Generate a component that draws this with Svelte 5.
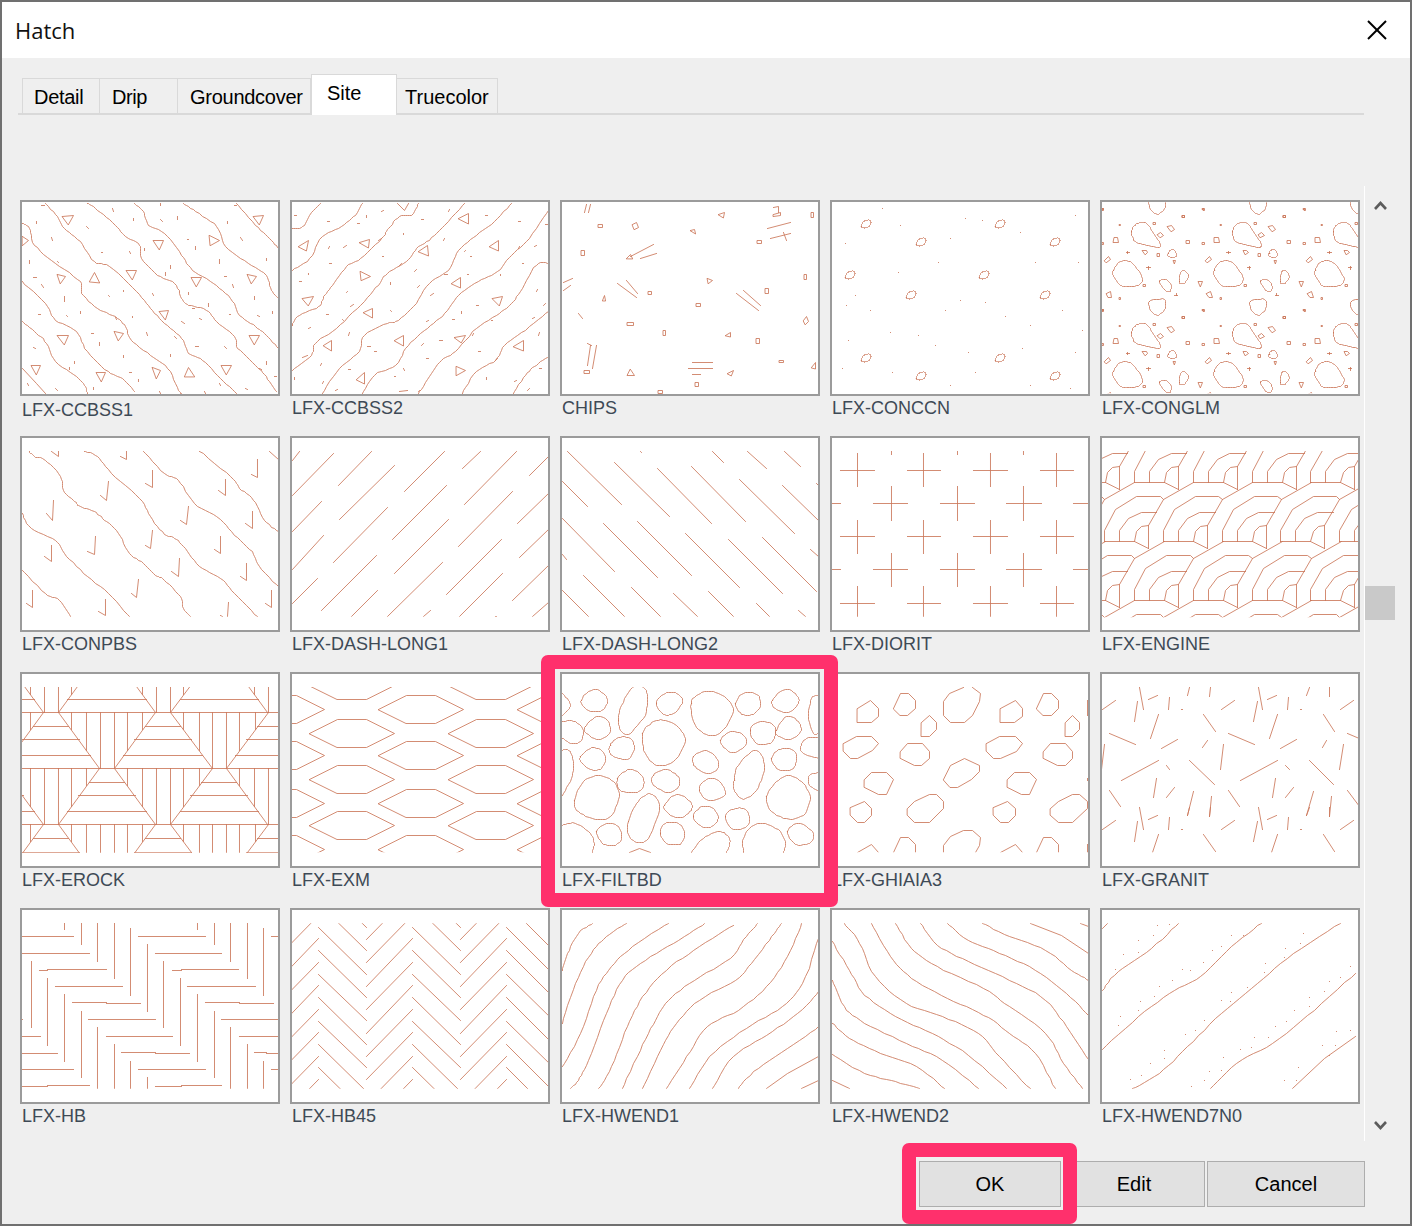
<script>
  // shift every "x y" pair of a path string
  const shift = (d, dx, dy) =>
    d.replace(/(-?[\d.]+) (-?[\d.]+)/g, (_, x, y) => `${+x + dx} ${+y + dy}`);

  function repeat(d, xs, ys) {
    let out = '';
    for (const y of ys) for (const x of xs) out += shift(d, x, y);
    return out;
  }

  const box = (x, y, w, h) => `M${x} ${y} ${x + w} ${y} ${x + w} ${y + h} ${x} ${y + h}Z`;
  const seg = (a, b, c, d) => `M${a} ${b} ${c} ${d}`;
  const dots = (list) => list.map(([x, y]) => `M${x} ${y} ${x} ${y}`).join('');

  // rounds hand-picked polylines off with a Catmull-Rom spline
  function smooth(d) {
    return d.match(/M[^M]*/g).map((sub) => {
      const nums = sub.match(/-?[\d.]+/g).map(Number);
      const closed = sub.includes('Z');
      const pts = [];
      for (let i = 0; i < nums.length; i += 2) pts.push([nums[i], nums[i + 1]]);
      if (pts.length < (closed ? 5 : 4)) return sub;
      const n = pts.length;
      const at = (i) => (closed ? pts[(i + n) % n] : pts[Math.max(0, Math.min(n - 1, i))]);
      let out = `M${pts[0][0]} ${pts[0][1]}`;
      for (let i = 0; i < (closed ? n : n - 1); i++) {
        const [p0, p1, p2, p3] = [at(i - 1), at(i), at(i + 1), at(i + 2)];
        for (let k = 1; k <= 6; k++) {
          const t = k / 6;
          const f = (a, b, c, e) =>
            0.5 * (2 * b + (c - a) * t + (2 * a - 5 * b + 4 * c - e) * t * t + (3 * b - a - 3 * c + e) * t * t * t);
          out += ` ${f(p0[0], p1[0], p2[0], p3[0]).toFixed(1)} ${f(p0[1], p1[1], p2[1], p3[1]).toFixed(1)}`;
        }
      }
      return out + (closed ? 'Z' : '');
    }).join('');
  }

  // concrete pebbles
  const pebble = (x, y) => `M${x - 5} ${y + 2} ${x - 2} ${y - 3} ${x + 3} ${y - 4} ${x + 5} ${y - 2} ${x + 3} ${y + 2} ${x - 2} ${y + 4}Z`;

  const conglmCell = `M125 125 135 105 155 97 175 105 190 130 208 155 208 172 170 165 135 155Z
    M70 240 90 215 120 215 140 235 157 265 145 285 105 290 85 280 70 255Z
    M178 335 222 328 225 355 205 375 185 365Z
    M72 143 82 141 86 157 70 157Z M232 110 245 106 253 118 245 124Z M202 132 212 128 220 135 210 142Z
    M157 182 168 180 173 188 165 193Z M235 190 245 178 257 185 257 200 236 200Z M43 210 55 200 62 208 50 218Z
    M250 212 257 212 253 220Z M268 275 272 248 282 241 295 258 285 278 272 280Z
    M208 275 225 268 243 285 240 303 225 300Z M48 310 60 303 65 322 55 322Z M325 275 338 275 332 288Z
    ${box(277, 75, 6, 6)}${box(190, 97, 6, 6)}${box(290, 152, 8, 8)}${box(202, 191, 7, 7)}${box(160, 283, 7, 7)}${box(277, 379, 7, 7)}
    ${box(37, 56, 4, 4)}${box(88, 103, 4, 4)}${box(88, 323, 4, 4)}${box(36, 357, 3, 3)}${box(36, 158, 4, 4)}
    M108 187 118 187M113 183 113 191M170 233 180 233M175 229 175 237M253 315 263 315M258 309 258 315`;

  const engineUnit = `M28 333 118 333 160 355
    M28 333 28 300 62 238 125 200 195 200 205 207 160 285
    M205 207 295 157
    M73 333 73 300 100 265 138 247 185 247
    M118 333 125 305 140 290 160 285 160 355`;

  function engine() {
    let out = '';
    for (let k = -3; k <= 3; k++) {
      const odd = Math.abs(k) % 2 === 1;
      for (let n = -2; n <= 5; n++) {
        out += shift(engineUnit, (odd ? 90 : 0) + 176.5 * n, 177 * k);
      }
    }
    return out;
  }

  function erock() {
    let out = seg(35, 142, 765, 142) + seg(35, 310, 765, 310) + seg(35, 478, 765, 478);
    const rows = [
      [-26, [-43, 277, 597]],
      [142, [117, 437, 756]],
      [310, [-43, 277, 597]],
      [478, [117, 437, 756]],
      [646, [-43, 277, 597]],
    ];
    for (const [y, centres] of rows) {
      for (const c of centres) {
        out += seg(c - 21, y, c - 139, y - 168) + seg(c + 21, y, c + 139, y - 168);
        for (const o of [20, 58, 102]) {
          const bottom = o <= 21 ? y : y - (o - 21) * 1.424;
          out += seg(c - o, y - 168, c - o, bottom) + seg(c + o, y - 168, c + o, bottom);
        }
        out += seg(c - 50, y + 42, c + 50, y + 42);
        const mid = y === 478 ? 84 : 81;
        out += seg(c - 81, y + mid, c + 81, y + mid);
        out += seg(c - 112, y + 129, c + 112, y + 129);
      }
    }
    return out;
  }

  function exm() {
    const hex = (x, y) => `M${x - 120} ${y} ${x - 40} ${y - 42} ${x + 42} ${y - 42} ${x + 122} ${y} ${x + 42} ${y + 42} ${x - 40} ${y + 42}Z`;
    let out = '';
    for (const x of [973, 1370]) for (const y of [61, 205, 343, 481]) out += hex(x, y);
    for (const x of [775, 1170, 1568]) for (const y of [133, 271, 415, 552]) out += hex(x, y);
    return out;
  }

  const granitCell = `M790 133 828 106M896 67 907 133M892 110 882 170M922 103 948 91M982 97 980 133M1040 67 1034 91
    M1098 67 1097 95M1016 132 1018 133M950 148 928 220M1080 148 1113 200M810 205 885 238M958 250 1005 224
    M1090 226 1077 247M1137 238 1127 314M845 346 951 287M973 300 983 314M1040 287 1110 358M945 340 937 397
    M997 367 973 397M810 376 843 424M1052 380 1034 452M1103 394 1097 455`;

  function herring45() {
    let out = '';
    for (let k = -2; k <= 8; k++) {
      const up = 118 + 70.3 * k;
      const down = 82 + 70.3 * k;
      for (const x of [747, 1015, 1283]) out += seg(x, up, x + 133, up - 142);
      for (const x of [880, 1148, 1415]) out += seg(x, down, x + 135, down + 140);
    }
    return out;
  }

  const hbRows = [
    [108, 35, 182], [108, 365, 558], [108, 745, 765], [160, 37, 228], [160, 416, 604],
    [208, 108, 274], [208, 488, 652], [211, 83, 108], [211, 462, 488], [258, 131, 322], [258, 507, 701],
    [307, 177, 274], [307, 556, 653], [310, 274, 371], [310, 653, 750], [357, 225, 416], [357, 604, 765], [357, 35, 37],
    [408, 35, 86], [408, 274, 462], [408, 653, 765], [460, 35, 134], [460, 416, 513], [460, 730, 765],
    [457, 319, 416], [457, 696, 730], [508, 35, 182], [508, 365, 558], [508, 745, 765],
    [558, 37, 108], [558, 416, 488], [555, 108, 228], [555, 488, 604],
  ];
  const hbCols = [
    [155, 70, 87], [534, 70, 87], [203, 70, 134], [583, 70, 134], [249, 70, 185], [628, 70, 185],
    [297, 70, 236], [677, 70, 236], [343, 85, 285], [722, 85, 285], [391, 132, 335], [437, 183, 383],
    [61, 183, 383], [106, 235, 435], [486, 235, 435], [155, 283, 485], [534, 283, 485], [203, 333, 533],
    [583, 333, 533], [249, 381, 566], [628, 381, 566], [297, 432, 566], [677, 432, 566], [343, 484, 566],
    [722, 484, 566], [391, 531, 566],
  ];
  const herring = hbRows.map(([y, a, b]) => seg(a, y, b, y)).join('') + hbCols.map(([x, a, b]) => seg(x, a, x, b)).join('');

  function diorit() {
    let out = '';
    const rowA = [[862, 813, 912], [1052, 1004, 1100], [1241, 1192, 1289], [1431, 1383, 1479]];
    const rowB = [[959, 909, 1006], [1147, 1098, 1195], [1335, 1286, 1386]];
    for (const [y, top, bottom] of [[121, 70, 170], [319, 270, 371], [520, 468, 560]]) {
      for (const [x, a, b] of rowA) out += seg(a, y, b, y) + seg(x, top, x, bottom);
    }
    for (const [y, top, bottom] of [[220, 168, 272], [418, 369, 470]]) {
      for (const [x, a, b] of rowB) out += seg(a, y, b, y) + seg(x, top, x, bottom);
      out += seg(790, y, 815, y) + seg(1477, y, 1520, y);
    }
    for (const x of [959, 1147, 1335]) out += seg(x, 63, x, 72);
    return out;
  }

  const tiles = [
    {
      name: 'LFX-CCBSS1', low: true, smooth: true, crop: [10, 195, 2.851, 3], clip: [15, 600],
      d: `M100 25 135 65 155 100 200 140 240 200 285 215 360 290 400 340 440 385 490 430 510 475 550 495 600 550 645 595
        M220 25 250 45 300 90 330 125 370 150 375 190 420 240 470 265 490 310 510 330 560 345 590 380 640 425 650 460 700 510 730 545 760 590
        M355 25 380 50 395 90 440 115 490 180 520 225 580 265 630 310 655 360 700 395 730 420 765 460
        M495 25 530 50 590 95 615 155 680 205 730 240 745 285 765 310
        M645 25 700 90 740 130 765 160
        M35 85 55 100 70 150 130 205 200 260 205 295 250 340 300 365 330 395 345 435 400 480 450 520 480 585 490 595
        M35 260 100 325 130 375 190 410 220 470 280 530 320 550 355 590
        M35 380 70 410 105 445 130 500 190 545 215 575 220 595
        M35 520 75 565 100 595
        M150 65 182 62 167 88ZM410 137 438 137 427 162ZM568 122 597 135 573 150ZM695 65 722 62 710 88ZM35 125 52 135 35 150Z
        M135 237 158 245 145 265ZM228 258 240 233 255 262ZM333 227 360 227 350 253ZM518 247 545 247 533 273ZM678 237 702 243 688 265Z
        M425 350 452 345 442 372ZM135 422 167 422 155 447ZM298 408 323 415 308 435ZM682 422 712 422 697 447Z
        M62 512 88 512 75 538ZM247 533 273 533 260 558ZM407 518 430 525 417 550ZM497 545 510 518 525 545ZM603 512 632 512 617 538Z
        M75 80 75 86M90 30 97 30M218 95 224 100M118 128 122 136M293 40 295 48M353 70 353 76M430 72 435 78M478 64 478 72M620 78 620 86
        M428 25 428 30M640 30 645 30M505 132 510 132M528 155 528 163M658 127 662 135M383 160 383 166M340 170 344 175M260 172 265 172
        M55 195 55 205M135 198 138 203M597 193 597 205M730 190 730 197M458 212 458 220M442 233 442 240M68 246 76 246M90 268 95 276
        M155 305 155 318M202 350 202 356M282 300 285 303M325 285 325 290M405 295 410 300M508 292 508 297M612 245 618 245M635 268 637 276
        M698 305 698 313M565 325 565 333M520 340 527 340M625 357 630 357M705 360 710 364M748 350 748 355M160 360 163 363M82 357 88 357
        M350 365 350 368M490 380 497 385M540 370 545 374M232 414 238 414M255 443 255 450M300 368 303 372M388 413 392 420M470 425 475 430
        M530 453 538 453M612 455 616 460M68 457 73 460M325 482 325 487M458 477 458 483M185 500 185 505M170 518 170 523M730 500 730 507
        M712 520 717 524M340 533 347 533M365 552 365 560M130 580 134 585M237 576 237 582M50 565 54 570M425 590 428 594M555 590 558 594
        M597 565 600 570M672 580 678 584M755 545 760 545`,
    },
    {
      name: 'LFX-CCBSS2', smooth: true, crop: [10, 195, 2.851, 3], clip: [15, 600],
      d: `M805 100 835 95 855 60 885 25
        M805 225 855 190 890 125 945 95 985 60 1005 25
        M805 390 825 360 880 335 895 305 920 270 960 215 1000 190 1060 130 1080 100 1110 65 1145 60 1165 25
        M1105 25 1125 45 1135 25
        M805 525 860 480 870 445 930 400 1000 330 1050 270 1075 235 1130 200 1160 160 1195 135 1240 90 1295 25
        M890 595 940 520 995 470 1010 420 1075 385 1100 380 1150 335 1195 265 1250 225 1280 165 1330 120 1380 80 1430 25
        M1005 595 1040 540 1100 510 1135 450 1190 400 1240 355 1280 300 1335 260 1390 230 1430 180 1480 130 1535 45
        M1165 595 1195 545 1230 495 1270 470 1330 400 1395 355 1430 325 1460 280 1500 210 1535 205
        M1290 595 1330 530 1385 495 1410 450 1470 405 1535 350
        M1435 595 1470 540 1500 510 1535 485
        M1280 70 1308 55 1308 85ZM823 153 850 137 845 165ZM997 143 1025 133 1022 157ZM1165 170 1190 150 1193 180Z
        M1368 155 1392 137 1392 167ZM1000 230 1027 243 1002 255ZM1258 265 1285 247 1285 277ZM835 310 865 303 850 330Z
        M1008 353 1033 340 1033 367ZM1375 310 1405 303 1395 330ZM895 450 918 435 918 465ZM1095 437 1122 422 1122 450Z
        M1268 427 1298 420 1288 442ZM1435 453 1463 435 1463 467ZM988 552 1010 533 1010 565ZM1272 515 1298 525 1272 540Z
        M812 62 818 60M905 78 912 78M990 85 996 85M1015 68 1015 62M1058 48 1065 45M1172 73 1178 73M1250 48 1252 42M1355 62 1360 60
        M1450 78 1456 78M1528 87 1533 87M1238 130 1236 137M1122 115 1122 118M1052 135 1058 130M908 160 912 155M950 157 958 152
        M1495 155 1502 150M1450 160 1453 155M1295 170 1300 167M1312 185 1316 185M1062 185 1066 185M912 205 918 205M1460 205 1465 205
        M1115 205 1110 210M1158 222 1152 228M850 238 850 234M825 258 830 258M1240 238 1246 238M1305 238 1308 238M1398 237 1398 240
        M1085 262 1085 268M1168 272 1162 278M962 288 958 292M1208 296 1200 300M1502 288 1504 284M978 328 972 334M1330 332 1336 332
        M1085 347 1087 350M1287 348 1287 355M1522 330 1526 326M902 357 908 357M1262 373 1268 372M948 372 950 376M850 400 856 398
        M1188 378 1194 375M1490 370 1494 366M1372 375 1376 375M968 412 966 420M1318 420 1322 416M1510 412 1506 420M1225 435 1232 435
        M1180 445 1174 450M1020 455 1028 455M1040 468 1046 468M1335 468 1340 468M835 488 848 482M885 510 888 506M1188 490 1194 490
        M965 522 972 522M1122 520 1124 525M1390 490 1384 495M1510 520 1516 520M812 548 812 554M895 560 892 566M1095 545 1100 545
        M1358 547 1358 554M1438 560 1444 556M1475 585 1480 580M935 582 928 586M1110 590 1132 587M1165 590 1168 587`,
    },
    {
      name: 'CHIPS', crop: [0, 0, 1, 1], clip: [201, 394],
      d: `M586 204 584 212M590 204 588 212${box(598, 224, 4, 3)}${box(581, 250, 3, 5)}M563 282 572 278M563 290 570 285
        M630 256 653 244M626 258 630 254 632 258ZM640 258 656 253M632 224 636 222 638 227 634 229Z
        M690 230 694 229 695 233ZM718 214 724 212 723 217ZM773 207 778 206 778 212M773 214 780 212 780 215 773 216Z
        ${box(811, 212, 2, 5)}M767 228 790 222M770 238 790 233M783 232 786 240${box(757, 240, 4, 3)}
        ${box(627, 322, 6, 3)}M602 300 604 295 605 300ZM617 283 636 297M626 280 637 293${box(648, 291, 3, 3)}
        M578 313 582 318M707 278 712 280 708 283Z${box(804, 274, 2, 5)}${box(765, 288, 3, 5)}${box(696, 303, 4, 3)}
        M736 293 758 310M743 290 760 305M803 320 806 316 808 321 805 324ZM725 335 730 332 730 336Z
        ${box(663, 330, 2, 5)}${box(756, 338, 3, 5)}M596 345 592 368M590 345 587 365M587 343 591 345
        ${box(584, 370, 5, 3)}M627 375 634 375 630 369ZM692 362 712 362M688 368 712 368M692 374 700 374
        M727 373 733 370 731 375Z${box(779, 360, 4, 2)}M811 367 815 362 815 368Z${box(695, 382, 3, 4)}${box(658, 390, 4, 3)}`,
    },
    {
      name: 'LFX-CONCCN', smooth: true, crop: [0, 0, 1, 1], clip: [201, 394],
      d: repeat(pebble(866, 224) + pebble(921, 242) + pebble(850, 275) + pebble(911, 295), [0, 134], [0, 134]) +
        dots([[845, 243], [882, 208], [898, 272], [938, 262], [965, 218], [982, 220], [1020, 232], [1075, 215], [1078, 262],
          [855, 295], [846, 305], [870, 310], [945, 310], [960, 300], [1005, 316], [1030, 325], [1062, 310], [1082, 330],
          [848, 340], [890, 332], [935, 345], [968, 352], [1022, 348], [1075, 352], [842, 368], [892, 372], [950, 385],
          [975, 372], [1030, 385], [1070, 388], [900, 225], [950, 238], [1035, 262], [985, 302], [918, 335]]),
    },
    { name: 'LFX-CONGLM', smooth: true, crop: [1090, 190, 3, 3], clip: [37, 610], d: repeat(conglmCell, [-302.5, 0, 302.5, 605], [-303, 0, 303]) },
    {
      name: 'LFX-CONPBS', smooth: true, crop: [10, 430, 2.851, 3], clip: [63, 560],
      d: `M55 65 70 80 100 90 145 140 152 180 185 215 200 230 240 245 270 270 310 310 340 370 380 400 415 435 440 450 485 500 495 535 515 560
        M212 63 250 80 290 130 370 205 400 260 440 312 470 325 500 355 540 410 600 445 640 490 705 560
        M380 63 440 130 480 150 525 220 590 260 640 315 690 365 710 410 765 470
        M540 63 630 140 655 175 695 210 725 270 765 305
        M740 63 765 87
        M35 250 60 295 130 330 155 370 210 430 280 490 340 560
        M35 420 100 490 140 510 172 560
        M138 63 138 80 118 65M333 63 331 88 315 80M707 87 705 143 688 132M407 120 406 172 385 160M280 155 276 212 258 197
        M614 147 613 197 594 180M124 212 120 272 103 250M508 228 503 283 487 270M692 243 690 296 672 280
        M407 300 400 355 385 345M243 318 240 373 222 363M600 318 600 370 583 358M118 345 118 395 98 378
        M483 385 480 440 460 423M674 400 674 450 657 438M366 447 362 503 346 490M65 480 65 532 47 520
        M272 507 272 556 252 543M745 480 745 533 728 520M622 517 619 560M600 555 606 560`,
    },
    {
      name: 'LFX-DASH-LONG1', crop: [10, 430, 2.851, 3], clip: [63, 560],
      d: `M805 90 825 63M805 197 922 70M937 167 1030 63M1125 185 1240 63M1290 115 1342 63M1295 222 1444 63M1482 137 1535 78
        M805 305 888 213M940 268 1097 105M1090 328 1245 165M1278 350 1433 183M1447 280 1535 190
        M805 417 895 315M922 397 1077 232M1097 430 1250 268M1245 492 1402 328M1453 382 1535 298
        M805 520 878 445M888 542 1045 377M1077 560 1233 397M1282 560 1404 430M1432 512 1535 405
        M973 560 1048 480M1178 560 1198 540M1490 560 1535 517M1385 559 1388 559`,
    },
    {
      name: 'LFX-DASH-LONG2', crop: [555, 430, 2.851, 3], clip: [63, 560],
      d: `M35 63 190 223M243 63 247 68M450 63 480 97M550 63 603 115M655 63 700 108
        M20 155 93 230M170 97 327 260M292 115 447 280M390 110 543 275M527 147 683 310M648 167 750 272M745 160 750 165
        M20 265 170 425M138 280 293 442M235 274 390 437M372 310 526 472M494 328 649 491M591 322 746 485M728 358 750 380
        M20 372 32 388M81 436 199 560M218 473 301 560M337 490 407 560M437 484 509 560M574 520 612 560M695 541 715 560
        M20 480 96 560`,
    },
    { name: 'LFX-DIORIT', crop: [555, 430, 2.851, 3], clip: [63, 560], d: diorit() },
    { name: 'LFX-ENGINE', crop: [1095, 430, 3, 3], clip: [63, 562], d: engine() },
    { name: 'LFX-EROCK', crop: [10, 665, 2.851, 3], clip: [66, 563], d: erock() },
    { name: 'LFX-EXM', crop: [10, 665, 2.851, 3], clip: [66, 562], d: exm() },
    {
      name: 'LFX-FILTBD', picked: true, smooth: true, crop: [530, 650, 3, 3], clip: [112, 608],
      d: `M153 150 190 118 225 135 232 160 210 185 170 178ZM97 130 118 155 118 175 97 195M97 215 130 213 160 240 150 275 120 280 97 265
        M165 230 200 200 235 215 238 250 205 268 170 250ZM265 210 275 165 308 112 340 112 352 140 345 195 300 250 275 245Z
        M378 160 405 130 440 130 458 155 430 190 400 192ZM338 250 360 222 400 210 445 232 465 275 430 335 380 345 345 310Z
        M240 285 265 263 300 265 313 293 298 325 265 325 240 310ZM97 300 120 303 130 340 125 385 97 435
        M152 320 180 295 215 300 227 330 210 358 180 358 152 335ZM263 385 300 358 338 380 338 415 310 428 270 420Z
        M370 375 407 358 445 380 445 410 415 428 370 405ZM133 450 160 395 205 377 250 395 268 440 240 500 195 508 145 485Z
        M295 515 320 460 350 433 375 440 388 480 355 565 325 578 297 560ZM403 465 440 433 480 455 483 480 450 503 412 488Z
        M97 525 135 520 180 550 192 580 187 608M200 545 230 520 265 530 275 565 255 585 220 582Z
        M390 550 405 520 445 520 463 550 450 582 410 580ZM298 607 328 595 360 607M483 607 520 565 570 545 598 565 597 590 590 607
        M640 607 640 565 665 530 705 520 750 545 767 580 760 607M773 545 805 520 848 545 848 570 830 582 795 582Z
        M490 500 515 470 550 475 565 505 545 530 515 530ZM585 500 610 477 645 477 658 505 650 530 610 538Z
        M508 420 525 390 560 388 583 415 580 440 535 452ZM490 320 530 302 560 325 565 352 535 370 495 350Z
        M483 160 510 130 550 125 590 145 610 185 575 245 535 255 495 225ZM617 160 640 130 680 132 692 165 670 192 635 192Z
        M727 150 765 118 800 135 805 160 775 187 735 175ZM865 135 845 145 835 200 850 250 865 250
        M660 240 690 215 730 225 735 255 720 280 680 280ZM738 240 770 200 805 215 812 245 780 268 745 258Z
        M572 270 600 245 640 255 647 285 610 308 585 295ZM612 390 625 345 670 302 695 315 702 360 680 420 640 447 612 420Z
        M725 325 750 297 790 300 800 330 785 358 745 358ZM865 262 830 265 812 290 820 310 865 325M865 368 838 375 838 405 865 423
        M710 440 740 395 775 377 815 395 840 440 825 490 780 508 725 485Z`,
    },
    {
      name: 'LFX-GHIAIA3', crop: [825, 665, 2.851, 3], clip: [66, 562],
      d: `M92 130 130 107 153 130 153 155 132 172 92 172ZM195 130 215 85 237 85 257 105 257 130 235 152 215 152Z
        M420 67 442 85 440 110 420 152 398 172 358 172 337 152 337 110 355 85 395 67
        M500 130 543 107 563 130 563 155 540 172 500 172ZM603 130 623 85 645 85 665 105 665 130 645 152 623 152Z
        M275 172 297 152 318 172 318 193 297 215 275 215ZM685 172 705 152 727 172 727 193 705 215 685 215ZM748 105 748 152
        M52 235 90 213 132 213 153 235 135 255 92 280 72 280 52 258ZM460 235 498 213 543 213 563 235 545 258 500 280 480 280 460 258Z
        M215 258 235 235 277 235 297 258 297 280 275 300 255 300 215 280ZM622 258 643 235 685 235 705 258 705 280 685 300 663 300 622 280Z
        M337 343 358 300 397 280 440 300 440 320 418 343 378 367 358 367ZM112 343 132 322 175 322 196 343 175 388 152 388 112 367Z
        M520 343 541 322 583 322 603 343 583 388 560 388 520 367ZM72 427 112 408 132 430 132 452 112 472 92 472 72 450Z
        M480 427 520 408 543 430 543 452 522 472 500 472 480 450ZM235 430 255 408 297 388 318 388 338 408 338 430 298 472 255 472 235 452Z
        M642 430 665 408 705 388 725 388 748 408 748 430 707 472 665 472 642 452ZM748 340 748 347
        M92 562 132 538 153 562M195 562 215 517 237 517 257 538 257 562M337 562 337 540 358 515 395 495 420 495 442 517 440 540 430 562
        M500 562 543 538 563 562M603 562 623 517 645 517 665 538 665 562M748 537 748 562`,
    },
    { name: 'LFX-GRANIT', crop: [825, 665, 2.851, 3], clip: [66, 562], d: repeat(granitCell, [-340, 0, 340, 680], [0, 360]) },
    { name: 'LFX-HB', crop: [10, 900, 2.851, 3], clip: [68, 566], d: herring },
    { name: 'LFX-HB45', crop: [10, 900, 2.851, 3], clip: [70, 566], d: herring45() },
    {
      name: 'LFX-HWEND1', smooth: true, crop: [555, 900, 1.936, 3], clip: [70, 566],
      d: `M14 210 25 160 45 100 73 70M14 370 40 250 70 160 100 110 138 70M14 500 50 400 80 270 110 200 150 140 220 70
        M30 566 45 540 65 480 100 340 130 240 175 180 240 120 290 70M85 566 110 500 140 380 170 290 215 210 280 140 345 75
        M130 566 165 450 195 360 220 300 270 240 340 175 370 110 393 70M170 566 205 450 235 370 280 300 350 240 380 190 420 110 438 70
        M215 566 255 470 295 380 355 330 410 260 450 170 478 70M260 566 300 470 370 385 440 320 480 250 510 115
        M305 566 345 470 410 405 470 340 510 275M355 566 385 515 450 445 510 380M410 566 450 520 510 470M477 566 510 540`,
    },
    {
      name: 'LFX-HWEND2', smooth: true, crop: [555, 900, 1.936, 3], clip: [70, 566],
      d: `M560 70 590 130 620 230 680 310 750 350 820 400 860 470 920 566M612 70 650 170 690 235 760 295 830 345 880 400 930 460 968 566
        M660 70 690 145 740 200 830 265 880 320 950 400 985 490 1022 566M708 70 740 135 800 185 880 240 950 300 990 380 1032 478
        M760 70 800 120 860 160 930 210 990 280 1032 345M828 70 880 110 950 150 1000 210 1032 240M920 70 980 105 1032 160M1018 70 1032 80
        M537 125 570 210 600 285 660 350 730 400 800 465 875 566M537 240 560 320 600 370 680 430 750 480 820 566
        M537 370 570 415 630 460 700 500 755 566M537 463 600 520 660 545 705 566M537 540 570 566`,
    },
    {
      name: 'LFX-HWEND7N0', smooth: true, crop: [555, 900, 1.936, 3], clip: [70, 566],
      d: `M1060 85 1070 70M1060 270 1090 215 1155 145 1207 70M1060 447 1130 350 1200 270 1250 230 1310 140 1367 70
        M1118 566 1170 520 1225 440 1290 340 1360 250 1430 160 1520 70M1270 566 1320 490 1390 430 1470 330 1550 220M1428 566 1490 475 1550 410` +
        dots([[1166, 75], [1190, 72], [1158, 105], [1130, 122], [1100, 163], [1130, 157], [1085, 208], [1310, 105], [1333, 105], [1290, 140], [1272, 150],
          [1415, 145], [1412, 172], [1443, 130], [1450, 100], [1375, 190], [1255, 187], [1215, 208], [1230, 210], [1195, 240], [1170, 258], [1373, 217],
          [1540, 200], [1520, 232], [1500, 243], [1340, 262], [1310, 278], [1290, 300], [1307, 303], [1133, 305], [1160, 290], [1130, 332], [1460, 293],
          [1460, 318], [1432, 330], [1490, 275], [1095, 350], [1090, 377], [1258, 360], [1395, 378], [1417, 365], [1240, 392], [1220, 402], [1355, 412],
          [1382, 412], [1513, 395], [1540, 390], [1180, 450], [1180, 475], [1153, 490], [1348, 443], [1328, 447], [1295, 473], [1485, 435], [1512, 435],
          [1440, 502], [1268, 515], [1290, 512], [1115, 538], [1135, 525], [1232, 560], [1258, 540], [1412, 540], [1435, 540], [1500, 465]]),
    },
  ];

  // the drawings are written in the coordinates of an enlarged crop, so map each tile back
  function origin(i, crop) {
    const [cx, cy, sx, sy] = crop;
    const left = 20 + 270 * (i % 5) + 2;
    const top = 200 + 236 * Math.floor(i / 5) + 2;
    return [(left - cx) * sx, (top - cy) * sy];
  }

  function viewBox(i, crop) {
    const [ox, oy] = origin(i, crop);
    return `${ox} ${oy} ${256 * crop[2]} ${192 * crop[3]}`;
  }

  function clipBox(i, t) {
    const [ox] = origin(i, t.crop);
    return { x: ox, y: t.clip[0], width: 256 * t.crop[2], height: t.clip[1] - t.clip[0] };
  }

  // put every point on a pixel centre: the plotted lines are one aliased pixel wide
  function snap(d, i, crop) {
    const [ox, oy] = origin(i, crop);
    const [, , sx, sy] = crop;
    return d.replace(/(-?[\d.]+) (-?[\d.]+)/g, (_, x, y) => {
      const nx = ox + (Math.floor((x - ox) / sx) + 0.5) * sx;
      const ny = oy + (Math.floor((y - oy) / sy) + 0.5) * sy;
      return `${nx.toFixed(2)} ${ny.toFixed(2)}`;
    });
  }

  const drawn = tiles.map((t, i) => ({ ...t, path: snap(t.smooth ? smooth(t.d) : t.d, i, t.crop) }));

  const tabs = ['Detail', 'Drip', 'Groundcover', 'Site', 'Truecolor'];
  const active = 'Site';
</script>

<div class="dialog">
  <header class="titlebar">
    <span class="title">Hatch</span>
    <button class="close" aria-label="Close">
      <svg width="20" height="20" viewBox="0 0 20 20" fill="none" stroke="#000" stroke-width="2">
        <line x1="1" y1="1" x2="19" y2="19"></line>
        <line x1="19" y1="1" x2="1" y2="19"></line>
      </svg>
    </button>
  </header>

  <div class="body">
    <div class="tabs">
      {#each tabs as tab}
        <div class="tab tab-{tab.toLowerCase()}" class:active={tab === active}>{tab}</div>
      {/each}
    </div>

    <div class="browser">
      <div class="grid">
        {#each drawn as t, i}
          <div class="tile" class:picked={t.picked}>
            <svg class="thumb" viewBox={viewBox(i, t.crop)} preserveAspectRatio="none">
              <defs>
                <clipPath id="clip-{i}">
                  <rect {...clipBox(i, t)}></rect>
                </clipPath>
              </defs>
              <path d={t.path} clip-path="url(#clip-{i})"></path>
            </svg>
            <div class="label" class:low={t.low}>{t.name}</div>
            {#if t.picked}
              <div class="mark mark-tile"></div>
            {/if}
          </div>
        {/each}
      </div>

      <div class="scrollbar">
        <div class="arrow up">
          <svg width="13" height="9" viewBox="0 0 13 9" fill="none" stroke="#5c5c5c" stroke-width="2.6">
            <path d="M1 8 6.5 2 12 8"></path>
          </svg>
        </div>
        <div class="thumbbar"></div>
        <div class="arrow down">
          <svg width="13" height="9" viewBox="0 0 13 9" fill="none" stroke="#5c5c5c" stroke-width="2.6">
            <path d="M1 1 6.5 7 12 1"></path>
          </svg>
        </div>
      </div>
    </div>

    <div class="actions">
      <button class="btn ok">OK<span class="mark mark-ok"></span></button>
      <button class="btn">Edit</button>
      <button class="btn cancel">Cancel</button>
    </div>
  </div>
</div>

<style>
  :global(body) {
    margin: 0;
    background: #efefef;
  }

  .dialog {
    width: 1412px;
    height: 1226px;
    box-sizing: border-box;
    border: 2px solid #707070;
    background: #efefef;
    font-family: "Liberation Sans", Arial, sans-serif;
    display: flex;
    flex-direction: column;
    overflow: hidden;
  }

  .titlebar {
    height: 56px;
    flex: none;
    background: #fff;
    display: flex;
    align-items: center;
    justify-content: space-between;
    padding: 0 23px 0 13px;
  }

  .title {
    font-family: "Open Sans", sans-serif;
    font-size: 22px;
    color: #111;
  }

  .close {
    background: none;
    border: none;
    padding: 0;
    display: flex;
  }

  .body {
    flex: 1;
    display: flex;
    flex-direction: column;
  }

  .tabs {
    display: flex;
    align-items: flex-end;
    margin: 16px 46px 0 16px;
    padding-left: 4px;
    height: 39px;
    border-bottom: 2px solid #d9d9d9;
  }

  .tab {
    box-sizing: border-box;
    height: 35px;
    padding: 6px 0 0 12px;
    border: 1px solid #d9d9d9;
    border-bottom: none;
    border-left: none;
    font-size: 20px;
    line-height: 24px;
    color: #000;
  }

  .tab-detail { width: 78px; padding-left: 11px; border-left: 1px solid #d9d9d9; letter-spacing: -0.3px; }
  .tab-drip { width: 78px; letter-spacing: -0.4px; }
  .tab-groundcover { width: 133px; letter-spacing: -0.27px; }
  .tab-site { width: 86px; }
  .tab-truecolor { width: 101px; padding-left: 8px; }

  .tab.active {
    height: 41px;
    margin-bottom: -2px;
    padding: 6px 0 0 15px;
    background: #fff;
    border-left: 1px solid #d9d9d9;
  }

  .browser {
    display: flex;
    margin: 71px 46px 0 16px;
    height: 955px;
    position: relative;
  }

  .grid {
    flex: 1;
    display: grid;
    grid-template-columns: repeat(5, 260px);
    grid-auto-rows: 236px;
    column-gap: 10px;
    padding: 14px 0 0 2px;
  }

  .tile {
    position: relative;
  }

  .tile.picked {
    z-index: 1;
  }

  .thumb {
    display: block;
    box-sizing: border-box;
    width: 260px;
    height: 196px;
    border: 2px solid #9b9b9b;
    background: #fff;
  }

  .thumb path {
    fill: none;
    stroke: #cb775a;
    stroke-width: 0.85;
    stroke-linecap: square;
    vector-effect: non-scaling-stroke;
    shape-rendering: crispEdges;
  }

  .label {
    margin: 2px 0 0 2px;
    font-size: 18px;
    line-height: 20px;
    color: #3e4a56;
  }

  .label.low {
    margin-top: 4px;
  }

  .scrollbar {
    position: absolute;
    top: 0;
    bottom: 0;
    right: -32px;
    width: 32px;
    box-sizing: border-box;
    border-left: 1px solid #fff;
    display: flex;
    flex-direction: column;
  }

  .arrow {
    display: flex;
    align-items: center;
    justify-content: center;
    width: 31px;
  }

  .arrow.up { height: 38px; }
  .arrow.down { height: 32px; margin-top: auto; }

  .thumbbar {
    margin-top: 362px;
    width: 30px;
    height: 34px;
    background: #c9c9c9;
  }

  .actions {
    display: flex;
    justify-content: flex-end;
    gap: 2px;
    margin: 20px 45px 0 0;
  }

  .btn {
    position: relative;
    box-sizing: border-box;
    width: 142px;
    height: 46px;
    padding: 0;
    background: #e1e1e1;
    border: 1px solid #adadad;
    font-family: inherit;
    font-size: 20px;
    color: #000;
  }

  .btn.ok {
    z-index: 1;
  }

  .btn.cancel {
    width: 158px;
  }

  .mark {
    position: absolute;
    box-sizing: border-box;
    border: 14px solid #ff306c;
    border-radius: 7px;
    pointer-events: none;
  }

  .mark-tile {
    left: -19px;
    top: -17px;
    width: 297px;
    height: 252px;
  }

  .mark-ok {
    left: -18px;
    top: -19px;
    width: 175px;
    height: 81px;
  }
</style>
